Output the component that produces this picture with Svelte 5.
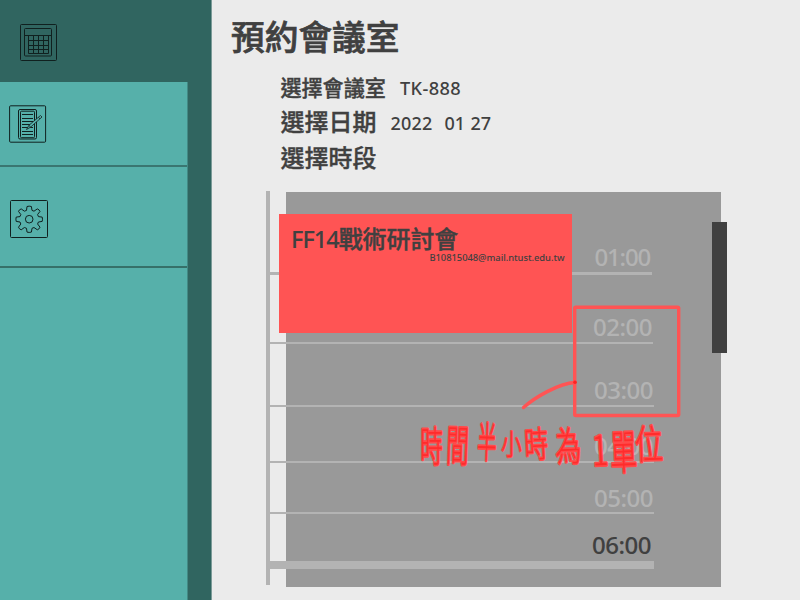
<script>
  const slots = [
    { time: '01:00', height: 83, line: 3, width: 382, pad: 2, drop: 5, gap: -1.2 },
    { time: '02:00', height: 69, line: 2, width: 383, pad: 1, drop: 5, gap: -0.5 },
    { time: '03:00', height: 63, line: 2, width: 384, pad: 1, drop: 5, gap: -0.5 },
    { time: '04:00', height: 56, line: 2, width: 384, pad: 1, drop: 5, gap: -0.5 },
    { time: '05:00', height: 51, line: 2, width: 383.5, pad: 0.5, drop: 4, gap: -0.5 },
    { time: '06:00', height: 55, line: 8, width: 384, pad: 3, drop: 6, gap: -0.5, active: true }
  ];

  const note = [
    { ch: '時', x: 421, y: 427, w: 21, h: 38, r: 0 },
    { ch: '間', x: 447, y: 426, w: 21, h: 40, r: 2 },
    { ch: '半', x: 478, y: 423, w: 18, h: 39, r: 2 },
    { ch: '小', x: 502, y: 431, w: 19, h: 27, r: 0 },
    { ch: '時', x: 525, y: 428, w: 22, h: 33, r: -3 },
    { ch: '為', x: 556, y: 428, w: 24, h: 37, r: -2 },
    { ch: '1', x: 593, y: 435, w: 14, h: 31, r: -3 },
    { ch: '單', x: 611, y: 431, w: 25, h: 43, r: -2 },
    { ch: '位', x: 636, y: 426, w: 26, h: 37, r: -2 }
  ];
</script>

<div class="app">
  <aside>
    <div class="tab current">
      <svg class="icon calendar" viewBox="0 0 37 37">
        <rect x="0.5" y="0.5" width="36" height="36" rx="1" />
        <rect x="4.5" y="4.5" width="27" height="27.5" rx="1" />
        <path d="M4.5 11.5H31.5M8.5 11.5V29.5H28.5V11.5M13.5 11.5V29.5M18.5 11.5V29.5M23.5 11.5V29.5M8.5 16.5H28.5M8.5 21.5H28.5M8.5 25.5H28.5" />
      </svg>
    </div>
    <nav>
      <div class="tab notes">
        <svg class="icon" viewBox="0 0 38 38">
          <rect x="0.6" y="0.8" width="36" height="36.4" rx="1" />
          <rect x="9.5" y="4.5" width="18" height="29.5" rx="1.5" />
          <rect x="11.5" y="6.2" width="14" height="26.5" rx="1" />
          <path d="M13 9.5H24M13 13.5H24M13 16.5H24M13 19.5H23M13 22.5H24M13 26.5H24M13 29.5H24" />
          <path class="pen" d="M17.5 24.5L20 20.2 31.5 10.5 33 12 21.5 22.2ZM20 20.2L21.5 22.2M29.5 12.3L31 14" />
        </svg>
      </div>
      <div class="tab settings">
        <svg class="icon" viewBox="0 0 38 38">
          <rect x="0.5" y="0.5" width="37" height="37" rx="1" />
          <circle cx="19.2" cy="19.2" r="3.8" />
          <path d="M17 6.5Q19.2 5.8 21.4 6.5L22 10.4 24 11.2 27.3 8.9Q29.4 9.6 30 11.4L27.6 14.5 28.4 16.6 32.2 17.1Q32.8 19.2 32.2 21.4L28.4 22 27.6 24 30 27.2Q29.2 29.3 27.3 29.8L24 27.5 22 28.3 21.4 32.1Q19.2 32.8 17 32.1L16.5 28.3 14.4 27.5 11.2 29.8Q9.2 29.2 8.5 27.2L10.8 24 10 22 6.2 21.4Q5.6 19.2 6.2 17.1L10 16.6 10.8 14.5 8.5 11.4Q9.2 9.5 11.2 8.9L14.4 11.2 16.5 10.4Z" />
        </svg>
      </div>
    </nav>
  </aside>

  <main>
    <h1>預約會議室</h1>
    <section class="form">
      <div class="row room"><span class="label">選擇會議室</span><span class="value">TK-888</span></div>
      <div class="row date">
        <span class="label">選擇日期</span>
        <span class="value">2022</span><span class="value month">01</span><span class="value day">27</span>
      </div>
      <div class="row"><span class="label">選擇時段</span></div>
    </section>

    <section class="schedule">
      <div class="axis"></div>
      <div class="board">
        {#each slots as s}
          <div
            class="slot"
            class:active={s.active}
            style:height="{s.height}px"
            style:width="{s.width}px"
            style:border-bottom-width="{s.line}px"
            style:padding="0 {s.pad}px {s.drop}px 0"
            style:letter-spacing="{s.gap}px"
          >
            <span>{s.time}</span>
          </div>
        {/each}
      </div>
      <div class="scrollbar"></div>
      <article class="event">
        <h2><span>FF14</span>戰術研討會</h2>
        <p>B10815048@mail.ntust.edu.tw</p>
      </article>
    </section>
  </main>

  <svg class="markup" viewBox="0 0 800 600">
    <rect x="574.7" y="307.3" width="104" height="108.2" rx="1" />
    <path d="M523.5 407.5C534 398 559 383 575 382.5" />
    <circle cx="575" cy="382.3" r="1.8" />
    {#each note as n}
      <text
        transform="translate({n.x + n.w / 2} {n.y + n.h / 2}) rotate({n.r}) scale({n.w / (n.ch === '1' ? 14 : 28)} {n.h / (n.ch === '1' ? 22 : 28)})"
        text-anchor="middle"
        y={n.ch === '1' ? 10.5 : 10.8}>{n.ch}</text>
    {/each}
  </svg>
</div>

<style>
  :global(body) {
    margin: 0;
    overflow: hidden;
  }
  .app {
    position: relative;
    display: flex;
    width: 800px;
    height: 600px;
    overflow: hidden;
    background: #ebebeb;
    color: #404040;
    font-family: 'Noto Sans', 'Noto Sans CJK TC', sans-serif;
    font-weight: 500;
  }
  aside {
    display: flex;
    flex-direction: column;
    box-sizing: border-box;
    width: 212px;
    flex: none;
    background: #306560;
    border-right: 1px solid #7b9b98;
  }
  .tab {
    box-sizing: border-box;
    flex: none;
  }
  .current {
    height: 82px;
    padding: 24px 0 0 20px;
  }
  nav {
    box-sizing: border-box;
    flex: 1;
    width: 188px;
    background: #56b0aa;
    border-right: 1px solid #438a85;
  }
  .notes {
    height: 85px;
    padding: 23px 0 0 9px;
    border-bottom: 2px solid #3a7671;
  }
  .settings {
    height: 101px;
    padding: 33px 0 0 10px;
    border-bottom: 2px solid #367069;
  }
  .icon {
    display: block;
    width: 38px;
    height: 38px;
    fill: none;
    stroke: #10201f;
    stroke-width: 1;
  }
  .calendar {
    width: 37px;
    height: 37px;
  }
  .pen {
    fill: #56b0aa;
    stroke-width: 0.8;
  }
  main {
    flex: 1;
    min-width: 0;
  }
  h1 {
    margin: 16px 0 0 19px;
    font-size: 33.7px;
    line-height: 42px;
    font-weight: 500;
    -webkit-text-stroke: 0.7px #404040;
  }
  .form {
    padding: 13.5px 0 0 68.4px;
  }
  .row {
    display: flex;
    align-items: center;
    height: 37px;
    font-size: 24px;
    line-height: 30px;
  }
  .label {
    -webkit-text-stroke: 0.35px #404040;
  }
  .room {
    height: 33px;
  }
  .date {
    height: 35px;
  }
  .room .label {
    font-size: 21.1px;
  }
  .value {
    margin-left: 14px;
    font-size: 18px;
    letter-spacing: 0.2px;
    position: relative;
    top: 1px;
  }
  .room .value {
    font-size: 18.2px;
    letter-spacing: 0.4px;
    top: 0;
  }
  .month {
    margin-left: 12px;
  }
  .day {
    margin-left: 5px;
  }
  .schedule {
    position: relative;
    display: flex;
    margin: 14.5px 0 0 54px;
    height: 396px;
  }
  .axis {
    width: 4px;
    height: 394px;
    background: #b3b3b3;
  }
  .board {
    box-sizing: border-box;
    width: 451.3px;
    height: 396px;
    padding-top: 1px;
    background: linear-gradient(#999, #999) 16px 1px / 435px 395px no-repeat;
  }
  .slot {
    box-sizing: border-box;
    display: flex;
    align-items: flex-end;
    justify-content: flex-end;
    border: 0 solid #b3b3b3;
    color: #b3b3b3;
    font-size: 24px;
    line-height: 20px;
    -webkit-text-stroke: 0.1px currentColor;
  }
  .active {
    color: #404040;
  }
  .scrollbar {
    position: absolute;
    left: 446px;
    top: 31px;
    width: 15px;
    height: 131px;
    background: #404040;
  }
  .event {
    position: absolute;
    left: 13px;
    top: 23px;
    box-sizing: border-box;
    width: 292.5px;
    height: 119px;
    padding: 9px 7px 0 12px;
    background: #ff5454;
  }
  h2 {
    margin: 0;
    font-size: 24px;
    line-height: 32px;
    font-weight: 500;
    letter-spacing: -0.1px;
    white-space: nowrap;
    -webkit-text-stroke: 0.4px #404040;
  }
  h2 span {
    font-size: 23.5px;
    letter-spacing: -1px;
    -webkit-text-stroke-width: 0.1px;
  }
  p {
    margin: -4px 0 0;
    font-size: 9.4px;
    line-height: 14px;
    letter-spacing: -0.04px;
    text-align: right;
  }
  .markup {
    position: absolute;
    inset: 0;
    width: 800px;
    height: 600px;
    fill: none;
    stroke: #ff5454;
    stroke-width: 3.4;
    stroke-linecap: round;
    stroke-linejoin: round;
    pointer-events: none;
  }
  .markup circle {
    fill: #f22;
    stroke: none;
  }
  .markup text {
    fill: #ff2c2c;
    stroke: #ff4a4a;
    stroke-width: 2.4;
    paint-order: stroke;
    font-family: 'Noto Sans CJK TC', sans-serif;
    font-size: 30px;
    font-weight: 300;
  }
</style>
